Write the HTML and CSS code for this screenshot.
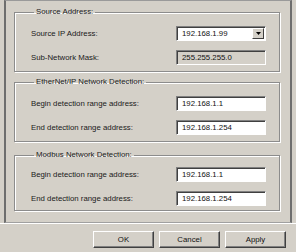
FILE: index.html
```html
<!DOCTYPE html>
<html lang='en'>
<head>
	<meta charset='UTF-8'>
	<meta name='viewport' content='width=device-width, initial-scale=1.0'>
	<title>Network Detection</title>
	<link rel="stylesheet" href="styles.css">
</head>
<body>
	<div class='dialog'>
		<div class='panel'>
			<fieldset class='group'>
				<legend>Source Address:</legend>
				<div class='row'>
					<span class='label'>Source IP Address:</span>
					<div class='combo'>
						<span class='combo-text'>192.168.1.99</span>
						<span class='combo-btn'><svg width='5' height='3' viewBox='0 0 5 3'><path d='M0 0h5L2.5 3z' fill='#000'/></svg></span>
					</div>
				</div>
				<div class='row'>
					<span class='label'>Sub-Network Mask:</span>
					<div class='field readonly'>255.255.255.0</div>
				</div>
			</fieldset>

			<fieldset class='group group-ethernet'>
				<legend>EtherNet/IP Network Detection:</legend>
				<div class='row'>
					<span class='label'>Begin detection range address:</span>
					<div class='field'>192.168.1.1</div>
				</div>
				<div class='row'>
					<span class='label'>End detection range address:</span>
					<div class='field'>192.168.1.254</div>
				</div>
			</fieldset>

			<fieldset class='group group-modbus'>
				<legend>Modbus Network Detection:</legend>
				<div class='row'>
					<span class='label'>Begin detection range address:</span>
					<div class='field'>192.168.1.1</div>
				</div>
				<div class='row'>
					<span class='label'>End detection range address:</span>
					<div class='field'>192.168.1.254</div>
				</div>
			</fieldset>
		</div>

		<div class='buttons'>
			<button class='btn'>OK</button>
			<button class='btn'>Cancel</button>
			<button class='btn'>Apply</button>
		</div>
	</div>
</body>
</html>
```

FILE: styles.css
```css
html, body{
	margin:0;
	padding:0;
	width:100%;
	height:100%;
	background-color:#d4d0c8;
	font-family:"Liberation Sans", Arial, sans-serif;
	font-size:7.8px;
	color:#1a1a1a;
}
.dialog{
	display:flex;
	flex-direction:column;
	width:296px;
	height:252px;
}
.panel{
	box-sizing:border-box;
	width:288px;
	height:223px;
	margin-left:4px;
	padding:6px 10px 0 8px;
	border-left:2px solid #6e6e6e;
	border-top:1px solid #9a9a9a;
	border-right:2px solid #6e6e6e;
	border-bottom:1px solid #a0a0a0;
}
.group{
	margin:0 0 5px 0;
	padding:9px 0 6px 16px;
	border:1px solid #8c8c8c;
	box-shadow:1px 1px 0 #fff, inset 1px 1px 0 #fff;
	min-width:0;
}
.group-ethernet{
	margin-bottom:8px;
}
.group-modbus{
	padding-top:7px;
	padding-bottom:4px;
}
.group legend{
	padding:0 2px;
	margin-left:3px;
	line-height:10px;
	height:10px;
}
.row{
	display:flex;
	align-items:center;
	height:15px;
}
.row + .row{
	margin-top:9px;
}
.label{
	flex:1 1 auto;
}
.field, .combo{
	box-sizing:border-box;
	width:90px;
	height:15px;
	margin-right:13px;
	border-top:1px solid #808080;
	border-left:1px solid #808080;
	border-right:1px solid #fff;
	border-bottom:1px solid #fff;
	box-shadow:inset 1px 1px 0 #404040;
	background-color:#fff;
	padding:0 0 0 5px;
	line-height:13px;
	color:#111;
}
.field.readonly{
	background-color:#d4d0c8;
}
.combo{
	display:flex;
	align-items:stretch;
	padding-right:1px;
	padding-bottom:1px;
}
.combo-text{
	flex:1 1 auto;
	line-height:12px;
	padding-top:1px;
}
.combo-btn{
	display:flex;
	align-items:center;
	justify-content:center;
	box-sizing:border-box;
	width:12px;
	margin-top:1px;
	background-color:#d4d0c8;
	border-top:1px solid #fff;
	border-left:1px solid #fff;
	border-right:1px solid #404040;
	border-bottom:1px solid #404040;
}
.buttons{
	display:flex;
	justify-content:flex-end;
	gap:5px;
	padding:7px 10px 0 0;
	border-top:1px solid #fff;
}
.btn{
	box-sizing:border-box;
	width:61px;
	height:17px;
	padding:0;
	font:inherit;
	color:#111;
	background-color:#d4d0c8;
	border-top:1px solid #fff;
	border-left:1px solid #fff;
	border-right:1px solid #404040;
	border-bottom:1px solid #404040;
	box-shadow:inset -1px -1px 0 #808080;
}
```
